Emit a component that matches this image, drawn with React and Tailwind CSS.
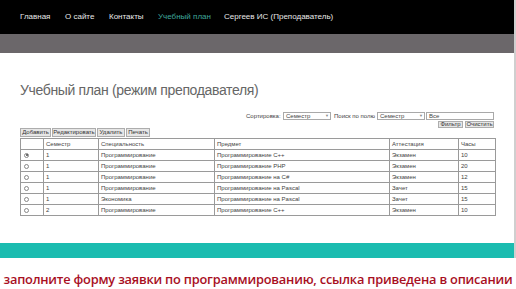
import React from "react";

const rows = [
  { s: "1", sp: "Программирование", p: "Программирование C++", a: "Экзамен", h: "10", sel: true },
  { s: "1", sp: "Программирование", p: "Программирование PHP", a: "Экзамен", h: "20" },
  { s: "1", sp: "Программирование", p: "Программирование на C#", a: "Экзамен", h: "12" },
  { s: "1", sp: "Программирование", p: "Программирование на Pascal", a: "Зачет", h: "15" },
  { s: "1", sp: "Экономика", p: "Программирование на Pascal", a: "Зачет", h: "15" },
  { s: "2", sp: "Программирование", p: "Программирование C++", a: "Экзамен", h: "10" },
];

function Select({ w }) {
  return (
    <div className={`flex h-[8px] items-center justify-between border border-[#a9a9a9] bg-white pl-[2px] pr-[1px] ${w}`}>
      <span>Семестр</span>
      <span className="text-[4px] text-[#888]">▼</span>
    </div>
  );
}

function Btn({ children, w }) {
  return (
    <div className={`flex h-full items-center justify-center border border-[#adadad] bg-[#e6e6e6] text-[#333] ${w}`}>
      {children}
    </div>
  );
}

export default function App() {
  return (
    <div className="relative h-[289px] w-[516px] overflow-hidden bg-white" style={{ fontFamily: '"Liberation Sans", Arial, sans-serif' }}>
      <div className="flex h-[258px]">
        <div className="flex w-[514px] flex-col">
          <nav className="flex h-[34px] items-center bg-black pl-[20px] text-[8px] text-[#e8e8e8]">
            <span className="w-[45px]">Главная</span>
            <span className="w-[44px]">О сайте</span>
            <span className="w-[49px]">Контакты</span>
            <span className="w-[66px] text-[#3fa79c]">Учебный план</span>
            <span>Сергеев ИС (Преподаватель)</span>
          </nav>
          <div className="h-[19px] bg-[#6b676a]" />
          <div className="flex h-[190px] flex-col pl-[20px] text-[6px] text-[#444]">
            <h1 className="mt-[27px] h-[20px] text-[14px] font-normal leading-[20px] tracking-[-0.35px] text-[#666]">
              Учебный план (режим преподавателя)
            </h1>
            <div className="mt-[12px] flex h-[8px] items-center">
              <span className="ml-[226px] w-[37px]">Сортировка:</span>
              <Select w="w-[48px]" />
              <span className="ml-[3px] w-[43px]">Поиск по полю</span>
              <Select w="w-[48px]" />
              <div className="ml-[1px] flex h-[8px] w-[68px] items-center border border-[#a9a9a9] bg-white pl-[2px]">Все</div>
            </div>
            <div className="mt-[1px] flex h-[7px] gap-[2px] pl-[418px]">
              <Btn w="w-[25px]">Фильтр</Btn>
              <Btn w="w-[29px]">Очистить</Btn>
            </div>
            <div className="flex h-[9px] gap-[1px]">
              <Btn w="w-[31px]">Добавить</Btn>
              <Btn w="w-[44px]">Редактировать</Btn>
              <Btn w="w-[28px]">Удалить</Btn>
              <Btn w="w-[24px]">Печать</Btn>
            </div>
            <table className="mt-[1px] w-[475px] table-fixed border-collapse">
              <colgroup>
                <col className="w-[23px]" />
                <col className="w-[55px]" />
                <col className="w-[116px]" />
                <col className="w-[175px]" />
                <col className="w-[69px]" />
                <col className="w-[37px]" />
              </colgroup>
              <thead>
                <tr className="h-[11px]">
                  <th className="border border-[#9a9a9a] p-0" />
                  <th className="border border-[#9a9a9a] pl-[2px] text-left font-normal">Семестр</th>
                  <th className="border border-[#9a9a9a] pl-[2px] text-left font-normal">Специальность</th>
                  <th className="border border-[#9a9a9a] pl-[2px] text-left font-normal">Предмет</th>
                  <th className="border border-[#9a9a9a] pl-[2px] text-left font-normal">Аттестация</th>
                  <th className="border border-[#9a9a9a] pl-[2px] text-left font-normal">Часы</th>
                </tr>
              </thead>
              <tbody>
                {rows.map((r, i) => (
                  <tr key={i} className="h-[11px]">
                    <td className="border border-[#9a9a9a] p-0">
                      <div className="ml-[3px] flex h-[5px] w-[5px] items-center justify-center rounded-full border border-[#888] bg-white">
                        {r.sel && <div className="h-[2px] w-[2px] rounded-full bg-[#444]" />}
                      </div>
                    </td>
                    <td className="border border-[#9a9a9a] pl-[2px]">{r.s}</td>
                    <td className="border border-[#9a9a9a] pl-[2px]">{r.sp}</td>
                    <td className="border border-[#9a9a9a] pl-[2px]">{r.p}</td>
                    <td className="border border-[#9a9a9a] pl-[2px]">{r.a}</td>
                    <td className="border border-[#9a9a9a] pl-[2px]">{r.h}</td>
                  </tr>
                ))}
              </tbody>
            </table>
          </div>
          <div className="h-[15px] bg-[#1bbcb0]" />
        </div>
        <div className="w-[2px] bg-[#cfcfcf]" />
      </div>
      <div className="flex h-[31px] items-center justify-center whitespace-nowrap pt-[12px] text-[12.8px] font-semibold tracking-[-0.2px] text-[#a8101f]" style={{ fontFamily: '"Open Sans", sans-serif' }}>
        заполните форму заявки по программированию, ссылка приведена в описании
      </div>
    </div>
  );
}
